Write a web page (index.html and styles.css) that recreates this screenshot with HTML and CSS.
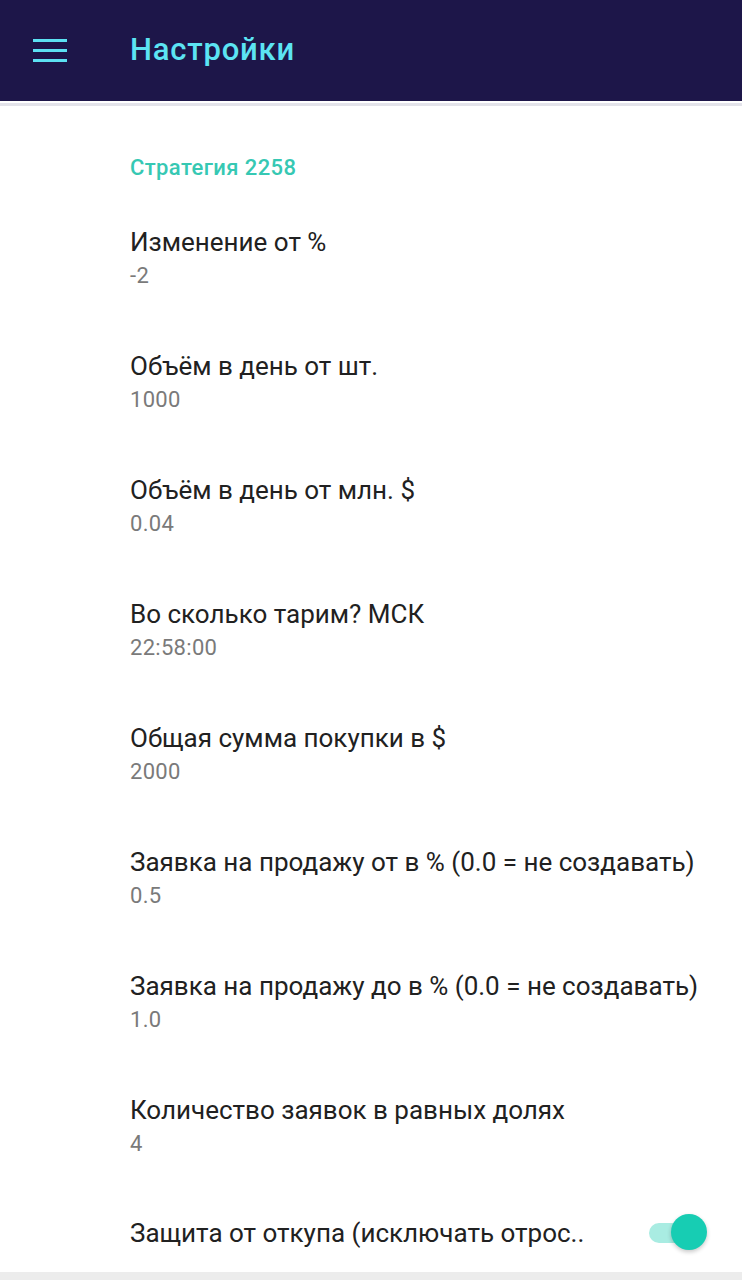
FILE: index.html
```html
<!DOCTYPE html>
<html lang="ru">
<head>
<meta charset="utf-8">
<title>Настройки</title>
<link rel="stylesheet" href="styles.css">
</head>
<body>
<header class="appbar">
  <svg class="menu" width="34" height="23" viewBox="0 0 34 23">
    <rect x="0" y="0" width="34" height="3" fill="#5ce1f2"/>
    <rect x="0" y="10" width="34" height="3" fill="#5ce1f2"/>
    <rect x="0" y="20" width="34" height="3" fill="#5ce1f2"/>
  </svg>
  <h1 class="title">Настройки</h1>
</header>
<div class="divider"></div>
<main class="list">
  <div class="section">Стратегия 2258</div>
  <div class="item"><div class="item-title">Изменение от %</div><div class="item-value">-2</div></div>
  <div class="item"><div class="item-title">Объём в день от шт.</div><div class="item-value">1000</div></div>
  <div class="item"><div class="item-title">Объём в день от млн. $</div><div class="item-value">0.04</div></div>
  <div class="item"><div class="item-title">Во сколько тарим? МСК</div><div class="item-value">22:58:00</div></div>
  <div class="item"><div class="item-title">Общая сумма покупки в $</div><div class="item-value">2000</div></div>
  <div class="item"><div class="item-title">Заявка на продажу от в % (0.0 = не создавать)</div><div class="item-value">0.5</div></div>
  <div class="item"><div class="item-title">Заявка на продажу до в % (0.0 = не создавать)</div><div class="item-value">1.0</div></div>
  <div class="item"><div class="item-title">Количество заявок в равных долях</div><div class="item-value">4</div></div>
  <div class="switch-row">
    <div class="item-title">Защита от откупа (исключать отрос..</div>
    <div class="switch"><div class="track"></div><div class="thumb"></div></div>
  </div>
</main>
<div class="bottom-bar"></div>
</body>
</html>
```
FILE: styles.css
```css
* { box-sizing: border-box; }
html, body {
  margin: 0;
  padding: 0;
  background: #ffffff;
  font-family: Roboto, "Noto Sans", "Liberation Sans", sans-serif;
}
body {
  width: 742px;
  height: 1280px;
  overflow: hidden;
  display: flex;
  flex-direction: column;
}
.appbar {
  height: 101px;
  background: #1d1649;
  display: flex;
  align-items: flex-start;
  padding-left: 33px;
  flex-shrink: 0;
}
.menu {
  display: block;
  margin-top: 39px;
}
.title {
  margin: 33px 0 0 63px;
  font-size: 31px;
  font-weight: 500;
  color: #5ce4f3;
  letter-spacing: 0.8px;
  line-height: 34px;
}
.divider {
  height: 3px;
  margin-top: 2px;
  background: #e3e3ea;
  flex-shrink: 0;
}
.list {
  flex: 1;
  padding: 49px 0 0 130px;
}
.section {
  font-size: 22px;
  font-weight: 500;
  line-height: 26px;
  letter-spacing: 0.4px;
  color: #36c8b3;
  margin-bottom: 15px;
}
.item {
  padding: 31px 0;
}
.item-title {
  font-size: 26px;
  line-height: 30px;
  color: #212121;
  white-space: nowrap;
}
.item-value {
  margin-top: 6px;
  font-size: 22px;
  line-height: 26px;
  letter-spacing: 0.3px;
  color: #7a7a7a;
}
.switch-row {
  height: 84px;
  padding-top: 6px;
  display: flex;
  align-items: center;
  justify-content: space-between;
  padding-right: 35px;
}
.switch {
  position: relative;
  width: 58px;
  height: 38px;
}
.track {
  position: absolute;
  left: 0;
  top: 9px;
  width: 52px;
  height: 20px;
  border-radius: 10px;
  background: #a9ece2;
}
.thumb {
  position: absolute;
  right: 0;
  top: 0;
  width: 36px;
  height: 36px;
  border-radius: 50%;
  background: #17cdb3;
  box-shadow: 0 2px 4px rgba(0,0,0,0.22);
}
.bottom-bar {
  height: 8px;
  background: #ececec;
  flex-shrink: 0;
}
```
